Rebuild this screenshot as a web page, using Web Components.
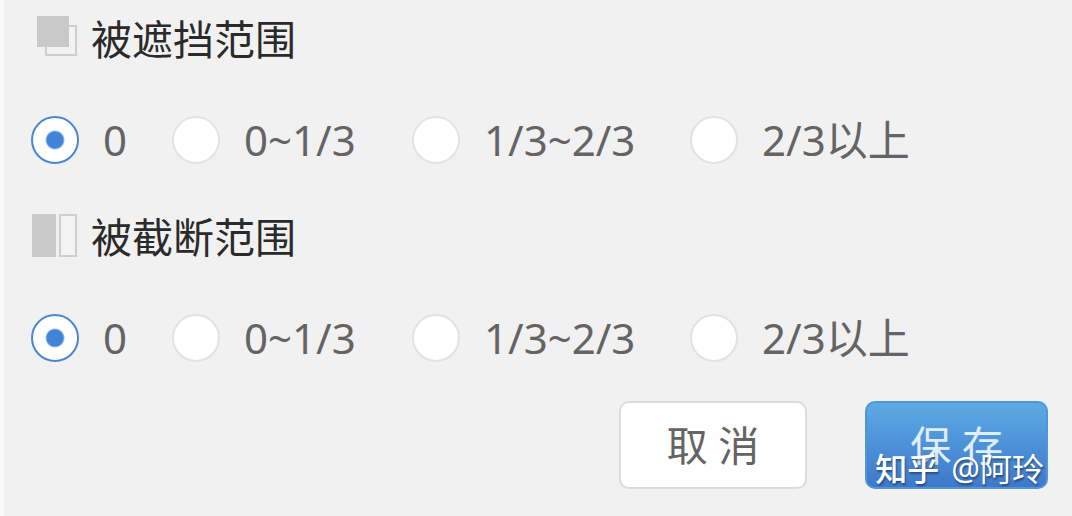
<!DOCTYPE html>
<html lang="zh-CN">
<head>
<meta charset="utf-8">
<title>范围设置</title>
<style>
body { margin: 0; min-height: 100vh; background: #f1f1f1; font-family: "Noto Sans", "Noto Sans CJK SC", sans-serif; }
</style>
</head>
<body>
<range-form></range-form>
<script>
class RangeGroup extends HTMLElement {
  constructor() {
    super();
    const name = this.getAttribute('name');
    const options = ['0', '0~1/3', '1/3~2/3', '2/3以上'];
    this.attachShadow({ mode: 'open' }).innerHTML = `
      <style>
        :host { display: block; }
        fieldset { margin: 0; padding: 0; border: 0; min-width: 0; }
        legend { display: flex; align-items: center; gap: 12px; padding: 0; height: 56px; font-size: 41px; line-height: 56px; color: #2a2a2a; }
        ::slotted(svg) { display: block; width: 48px; height: 48px; flex: none; }
        .options { display: grid; grid-template-columns: 141px 240px 278px auto; align-items: center; padding-top: 44px; }
        label { display: flex; align-items: center; gap: 24px; height: 58px; font-size: 42px; line-height: 56px; color: #646464; white-space: nowrap; }
        input { appearance: none; box-sizing: border-box; width: 48px; height: 48px; margin: 0; flex: none; border: 2px solid #e2e2e2; border-radius: 50%; background: #fff; }
        input:checked { border-color: #4a87d2; background: radial-gradient(circle, #4083d8 8px, #fff 10px); }
      </style>
      <fieldset>
        <legend><slot name="icon"></slot><span><slot></slot></span></legend>
        <div class="options">${options.map((text, i) =>
          `<label><input type="radio" name="${name}" value="${i}"${i ? '' : ' checked'}><span>${text}</span></label>`).join('')}
        </div>
      </fieldset>`;
  }
}
customElements.define('range-group', RangeGroup);

class ActionButton extends HTMLElement {
  constructor() {
    super();
    this.attachShadow({ mode: 'open' }).innerHTML = `
      <style>
        :host { display: block; }
        button { box-sizing: border-box; display: block; height: 88px; padding: 0 46px; border: 2px solid #dcdcdc; border-radius: 10px; background: #fff; color: #646464; font: 400 41px/80px "Noto Sans", "Noto Sans CJK SC", sans-serif; white-space: nowrap; }
        :host([primary]) button { padding: 0 43px; border-color: #4f96d8; background: linear-gradient(#5cabe4, #3f78cb); color: #e0eefc; }
      </style>
      <button type="button"><slot></slot></button>`;
  }
}
customElements.define('action-button', ActionButton);

class AuthorMark extends HTMLElement {
  constructor() {
    super();
    this.attachShadow({ mode: 'open' }).innerHTML = `
      <style>
        :host { display: flex; gap: 12px; font-size: 32px; line-height: 40px; color: #fff; text-shadow: 1px 2px 2px #0006; white-space: nowrap; pointer-events: none; }
        b { font-weight: 500; }
      </style>
      <b>知乎</b><span>@阿玲</span>`;
  }
}
customElements.define('author-mark', AuthorMark);

class RangeForm extends HTMLElement {
  constructor() {
    super();
    this.attachShadow({ mode: 'open' }).innerHTML = `
      <style>
        :host { box-sizing: border-box; display: block; min-height: 100vh; padding: 11px 24px 24px 27px; border-left: 4px solid #f9f9f9; }
        form { display: flex; flex-direction: column; gap: 40px; }
        footer { position: relative; display: flex; justify-content: flex-end; gap: 58px; margin-top: -6px; }
        author-mark { position: absolute; right: 4px; bottom: 0; }
      </style>
      <form>
        <range-group name="occluded">
          <svg slot="icon" viewBox="0 0 48 48" aria-hidden="true"><path d="M15 11H45V40H15Z" fill="#f3f3f3" stroke="#cecece" stroke-width="2"/><path d="M6 1H38V32H6Z" fill="#c9c9c9"/></svg>
          被遮挡范围
        </range-group>
        <range-group name="truncated">
          <svg slot="icon" viewBox="0 0 48 48" aria-hidden="true"><path d="M1 1H25V44H1Z" fill="#c9c9c9"/><path d="M29 2H45V43H29Z" fill="#f3f3f3" stroke="#cecece" stroke-width="2"/></svg>
          被截断范围
        </range-group>
        <footer>
          <action-button>取 消</action-button>
          <action-button primary>保 存</action-button>
          <author-mark></author-mark>
        </footer>
      </form>`;
  }
}
customElements.define('range-form', RangeForm);
</script>
</body>
</html>
